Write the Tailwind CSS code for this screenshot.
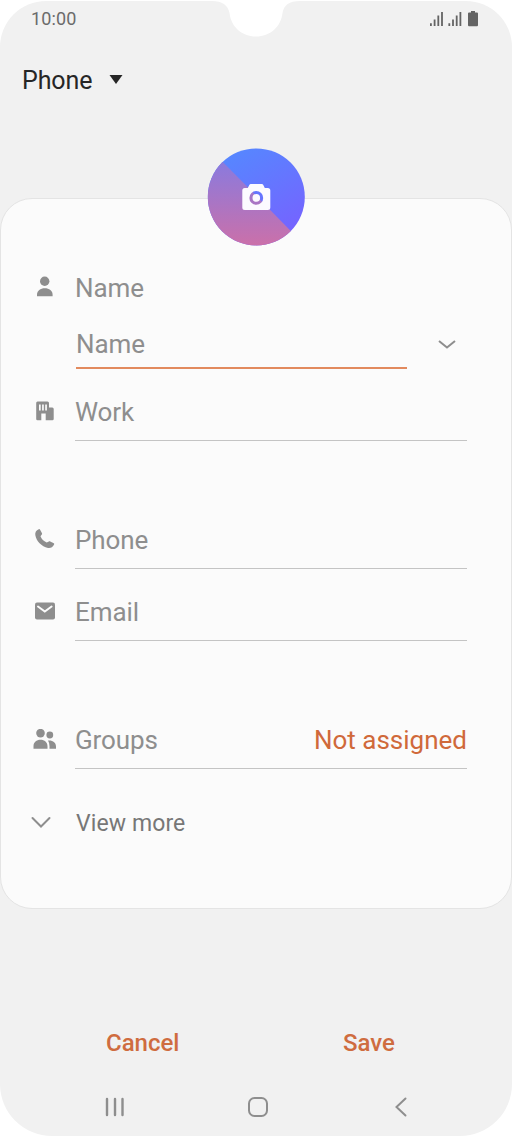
<!DOCTYPE html>
<html lang="en">
<head>
<meta charset="utf-8">
<title>New contact</title>
<script src="https://cdn.jsdelivr.net/npm/@tailwindcss/browser@4"></script>
</head>
<body class="bg-white">
<div class="pt-px w-[512px] h-[1137px] font-[Roboto,sans-serif] overflow-hidden">
<div class="relative flex flex-col h-[1135px] bg-[#f1f1f1] rounded-t-[46px] rounded-b-[52px]">
  <!-- Camera notch -->
  <svg class="absolute left-[212px] top-[-1px]" width="88" height="38" viewBox="0 0 88 38" fill="#fff"><path d="M0 0V1C10 1 16 5 17.500 13C19 27 30 36.500 44 36.500S69 27 70.500 13C72 5 77 1 88 1V0Z"/></svg>
  <header class="flex justify-between items-center h-9 pl-[31px] pr-[33px] text-[#6b6b6b]">
    <span class="text-[18px] leading-6 tracking-[0.15px]">10:00</span>
    <svg width="50" height="18" viewBox="429 9 50 18" fill="#646464"><path d="M430 22.200h1.800V25H430zM433.700 18.500h1.800V25h-1.800zM437.400 14.500h1.800V25h-1.800zM441.100 11h1.800v14h-1.800zM448.400 22.200h1.800V25h-1.800zM452.100 18.500h1.800V25h-1.800zM455.800 14.500h1.800V25h-1.800zM459.500 11h1.800v14h-1.800z"/><path d="M471 10h4v1.500h2q1 0 1 1V24q0 1.300-1 1.300h-8q-1 0-1-1.300V12.500q0-1 1-1h2z"/></svg>
  </header>
  <div class="flex items-center h-[88px] pl-[22px] gap-[17px] text-[#262626]">
    <span class="text-[25px] leading-[30px] tracking-[-0.1px]">Phone</span>
    <svg class="-mt-1" width="14" height="9" viewBox="0 0 14 9" fill="#262626"><path d="M.5 0h13L7 9z"/></svg>
  </div>
  <main class="relative mt-[73px] h-[711px] bg-[#fbfbfb] border border-[#e4e4e4] rounded-[32px] pt-[61px] pl-6 pr-11 text-[26px] leading-[30px] tracking-[-0.1px] text-[#8e8e8e]">
    <svg class="absolute left-[206px] top-[-52px]" width="99" height="99" viewBox="-.3 -.9 99 99">
      <defs><linearGradient id="blue" x1=".2" y1="0" x2=".8" y2="1"><stop stop-color="#5489ff"/><stop offset="1" stop-color="#7860ff"/></linearGradient><linearGradient id="pink" x1="0" y1="0" x2="0" y2="1"><stop offset="0" stop-color="#8a7ade"/><stop offset="1" stop-color="#cb70a9"/></linearGradient><clipPath id="disc"><circle cx="49" cy="49" r="48.500"/></clipPath></defs>
      <g clip-path="url(#disc)"><rect width="98" height="98" fill="url(#blue)"/><path d="M0 14H15.500L83.500 83V98H0Z" fill="url(#pink)"/></g>
      <path fill="#fcfaff" fill-rule="evenodd" d="M43.500 36h11q1 0 1.500 1l1.500 3H60.500q2.500 0 2.500 2.500v17q0 2.500-2.500 2.500h-23Q35 62 35 59.500v-17Q35 40 37.500 40H40.500l1.500-3q.5-1 1.500-1ZM49 43.100a6.900 6.900 0 1 0 0 13.800 6.900 6.900 0 0 0 0-13.800ZM49 46.200a3.800 3.800 0 1 1 0 7.600 3.800 3.800 0 0 1 0-7.600Z"/>
    </svg>
    <div class="flex items-center h-14 gap-[10px]">
      <svg class="w-10 h-6" viewBox="25 275.700 40 24" fill="#8e8e8e"><circle cx="44.700" cy="281" r="4.700"/><path d="M37 296v-1.500c0-4 3.400-6.500 7.800-6.500s7.800 2.500 7.800 6.500V296Z"/></svg>
      <span>Name</span>
    </div>
    <div class="flex h-[53px]">
      <div class="ml-[51px] w-[331px] h-[53px] pt-[13px] border-b-2 border-[#e28a5e]">Name</div>
      <svg class="ml-[31px] mt-[23px]" width="18" height="11" viewBox="0 0 18 11" fill="none" stroke="#8e8e8e" stroke-width="2"><path d="M1 2l8 6.500L17 2"/></svg>
    </div>
    <div class="flex items-center h-[57px] mt-[15px] gap-[10px]">
      <svg class="w-10 h-6" viewBox="25 400.500 40 24" fill="#8e8e8e"><path fill-rule="evenodd" d="M37.500 401h10q1.500 0 1.500 1.500V407h3.300q1.400 0 1.400 1.500V418.500q0 1.300-1.400 1.300h-6.600V413h-4.400v6.800h-3.800q-1.300 0-1.300-1.300v-16q0-1.500 1.300-1.500ZM39 404v6h1.700v-6ZM42.100 404v6h1.700v-6ZM45.200 404v6h1.700v-6Z"/></svg>
      <div class="w-[392px] h-full pt-[13px] border-b border-[#c4c4c4]">Work</div>
    </div>
    <div class="flex items-center h-[57px] mt-[71px] gap-[10px]">
      <svg class="w-10 h-6" viewBox="25 528.500 40 24" fill="#8e8e8e"><path d="M38.800 528.700c.5-.2 1 0 1.300.5l1.900 3.600c.2.500.1 1-.2 1.300l-1.300 1.700c1 2.800 3.200 4.800 6.200 6.300l2.200-1c.4-.3.900-.3 1.300 0l3.600 1.600c.5.300.6.800.3 1.300-1.300 2.800-3.600 3.800-6.100 3.400-6.500-1.200-11.700-6.600-12.700-12.800-.4-2.500.8-5 3.500-5.900Z"/></svg>
      <div class="w-[392px] h-full pt-[13px] border-b border-[#c4c4c4]">Phone</div>
    </div>
    <div class="flex items-center h-[57px] mt-[15px] gap-[10px]">
      <svg class="w-10 h-6" viewBox="25 600.500 40 24"><rect x="35" y="602" width="20" height="17" rx="2" fill="#8e8e8e"/><path d="M38 606l6.800 5 6.800-5" fill="none" stroke="#fbfbfb" stroke-width="2" stroke-linecap="round"/></svg>
      <div class="w-[392px] h-full pt-[13px] border-b border-[#c4c4c4]">Email</div>
    </div>
    <div class="flex items-center h-[57px] mt-[71px] gap-[10px]">
      <svg class="w-10 h-6" viewBox="25 728.500 40 24" fill="#8e8e8e"><circle cx="40.500" cy="732.600" r="4.300"/><circle cx="49.800" cy="734.500" r="3.400"/><path d="M33.500 748.300v-2.500c0-4 3-6.500 7-6.500s7 2.500 7 6.500v2.500ZM48 740c4.700-.5 8 2 8 6v2.300h-6.500v-2.500q0-3.500-1.500-5.800Z"/></svg>
      <div class="flex justify-between w-[392px] h-full pt-[13px] border-b border-[#c4c4c4]"><span>Groups</span><span class="text-[#d0693a] tracking-normal">Not assigned</span></div>
    </div>
    <div class="flex items-center mt-[40px] pl-1.5">
      <svg class="mr-[25px] -mt-1" width="20" height="13" viewBox="0 0 20 13" fill="none" stroke="#8e8e8e" stroke-width="2" stroke-linecap="round"><path d="M1.500 2L10 10.500l8.500-8.500"/></svg>
      <span class="text-[23px] tracking-[0.1px] text-[#777]">View more</span>
    </div>
  </main>
  <div class="flex mt-[119px] h-[30px] text-[24px] leading-[30px] font-medium text-[#cf6c3f]">
    <span class="ml-[106px] w-[237px]">Cancel</span><span>Save</span>
  </div>
  <nav class="flex items-center mt-[37px] h-6 pl-[105px] text-[#8e8e8e]">
    <svg width="20" height="22" viewBox="0 0 20 22" stroke="currentColor" stroke-width="2.400" stroke-linecap="round"><path d="M2 3v16M10 3v16M17.500 3v16"/></svg>
    <svg class="ml-[122px]" width="22" height="22" viewBox="0 0 22 22" fill="none" stroke="currentColor" stroke-width="2"><rect x="2" y="2" width="18" height="18" rx="5.500"/></svg>
    <svg class="ml-[126px]" width="12" height="22" viewBox="0 0 12 22" fill="none" stroke="currentColor" stroke-width="2" stroke-linecap="round"><path d="M10.500 2.500L1.500 11l9 8.500"/></svg>
  </nav>
</div>
</div>
</body>
</html>
